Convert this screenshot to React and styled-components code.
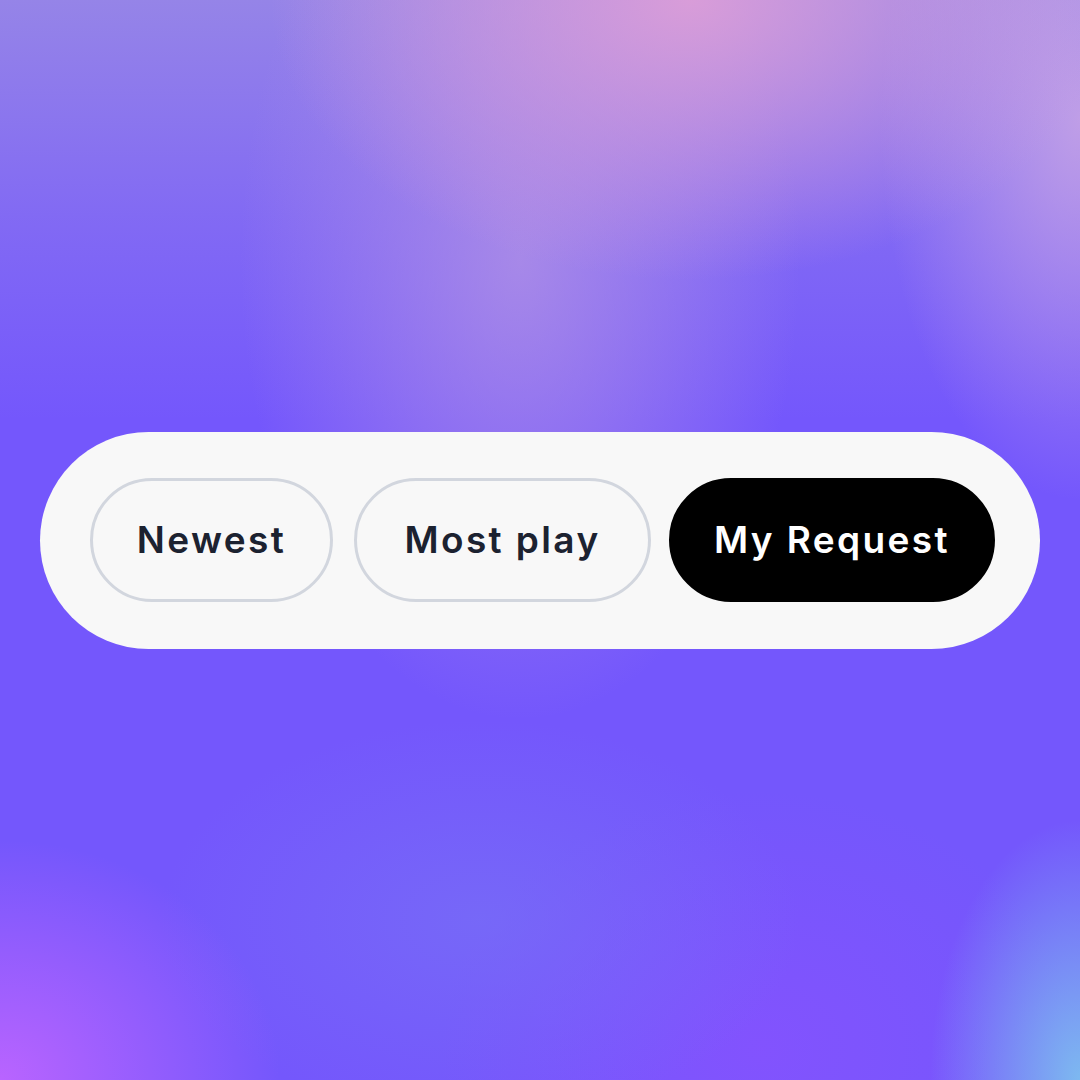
import React, { useState } from "react";
import styled, { createGlobalStyle } from "styled-components";

const GlobalStyle = createGlobalStyle`
  html, body {
    margin: 0;
    padding: 0;
  }
  body {
    font-family: Inter, "Noto Sans", sans-serif;
  }
`;

const Page = styled.div`
  width: 1080px;
  height: 1080px;
  display: flex;
  align-items: center;
  justify-content: center;
  overflow: hidden;
  background:
    radial-gradient(ellipse 420px 280px at 690px 0px, rgba(220, 158, 216, 0.95), rgba(220, 158, 216, 0) 100%),
    radial-gradient(ellipse 280px 460px at 520px 260px, rgba(180, 148, 228, 0.75), rgba(180, 148, 228, 0) 100%),
    radial-gradient(ellipse 200px 380px at 1080px 120px, rgba(200, 165, 230, 0.85), rgba(200, 165, 230, 0) 100%),
    linear-gradient(180deg, rgba(155, 140, 228, 0.85) 0px, rgba(155, 140, 228, 0.35) 220px, rgba(155, 140, 228, 0) 420px),
    radial-gradient(ellipse 150px 260px at 1080px 1080px, rgba(125, 185, 240, 1), rgba(125, 185, 240, 0) 100%),
    radial-gradient(ellipse 280px 240px at 0px 1080px, rgba(185, 100, 255, 1), rgba(185, 100, 255, 0) 100%),
    radial-gradient(ellipse 320px 200px at 480px 920px, rgba(120, 115, 245, 0.6), rgba(120, 115, 245, 0) 100%),
    radial-gradient(ellipse 320px 260px at 760px 1050px, rgba(140, 80, 255, 0.6), rgba(140, 80, 255, 0) 100%),
    #7457fc;
`;

const Tabs = styled.div`
  width: 1000px;
  height: 217px;
  box-sizing: border-box;
  padding: 0 45px 0 50px;
  display: flex;
  align-items: center;
  background: #f8f8f8;
  border-radius: 109px;
`;

const Tab = styled.button`
  height: 124px;
  width: ${(p) => p.$w}px;
  margin-right: ${(p) => p.$gap}px;
  box-sizing: border-box;
  border-radius: 62px;
  border: 3px solid ${(p) => (p.$active ? "#000" : "#d2d6de")};
  background: ${(p) => (p.$active ? "#000" : "transparent")};
  color: ${(p) => (p.$active ? "#ffffff" : "#1c2230")};
  font-family: Inter, "Noto Sans", sans-serif;
  font-weight: 600;
  font-size: 37px;
  letter-spacing: 2.4px;
  display: flex;
  align-items: center;
  justify-content: center;
  padding: 0 0 2px;
  cursor: pointer;
`;

const tabs = [
  { label: "Newest", w: 243, gap: 21 },
  { label: "Most play", w: 297, gap: 18 },
  { label: "My Request", w: 326, gap: 0 },
];

export default function App() {
  const [active, setActive] = useState(2);

  return (
    <>
      <GlobalStyle />
      <Page>
        <Tabs>
          {tabs.map((t, i) => (
            <Tab
              key={t.label}
              $w={t.w}
              $gap={t.gap}
              $active={active === i}
              onClick={() => setActive(i)}
            >
              {t.label}
            </Tab>
          ))}
        </Tabs>
      </Page>
    </>
  );
}
